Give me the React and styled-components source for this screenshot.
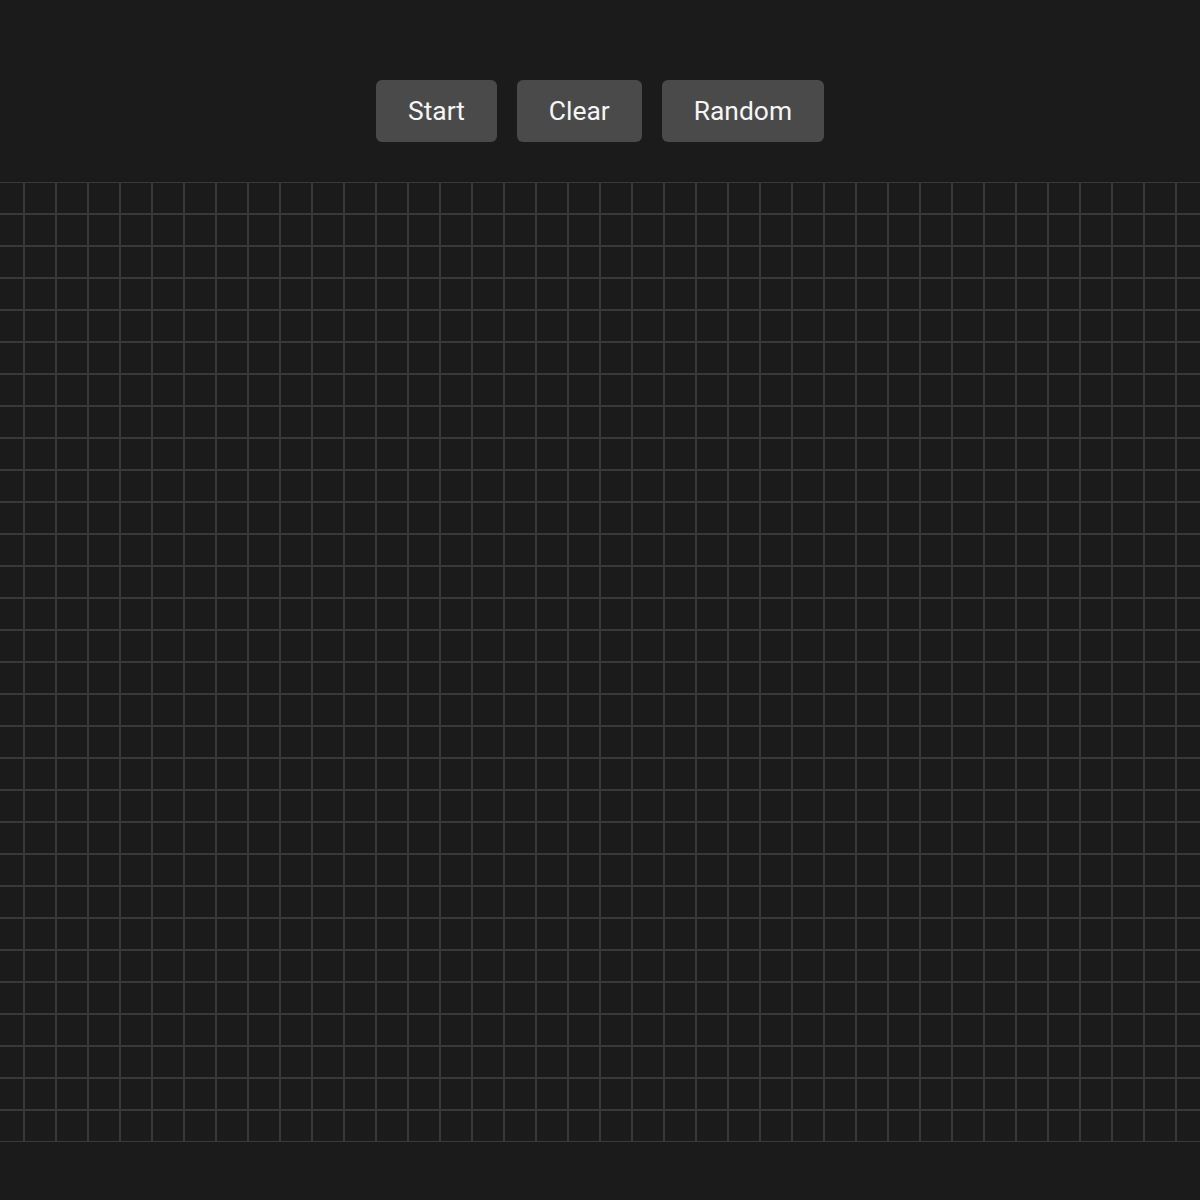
import React, { useState } from 'react';
import styled, { createGlobalStyle } from 'styled-components';

const ROWS = 30;
const COLS = 38;
const CELL = 32;

const GlobalStyle = createGlobalStyle`
  html, body {
    margin: 0;
    padding: 0;
    background: #1b1b1b;
    overflow: hidden;
  }
  body {
    font-family: Roboto, "Liberation Sans", sans-serif;
  }
`;

const Page = styled.div`
  box-sizing: border-box;
  height: 1200px;
  display: flex;
  flex-direction: column;
  align-items: center;
  padding-top: 80px;
  gap: 40px;
  overflow: hidden;
`;

const Controls = styled.div`
  display: flex;
  gap: 20px;
`;

const Button = styled.button`
  padding: 16px 32px;
  border: none;
  border-radius: 6px;
  background: #4a4a4a;
  color: #f5f5f5;
  font-family: Roboto, "Liberation Sans", sans-serif;
  font-size: 26.4px;
  line-height: 30px;
  cursor: pointer;

  &:hover {
    background: #555;
  }
`;

const Board = styled.div`
  flex-shrink: 0;
  display: grid;
  grid-template-columns: repeat(${COLS}, ${CELL}px);
  grid-template-rows: repeat(${ROWS}, ${CELL}px);
`;

const Cell = styled.div`
  box-sizing: border-box;
  border: 1px solid #393939;
  background: ${props => (props.$alive ? '#d0d0d0' : 'transparent')};
`;

const emptyGrid = () => Array.from({ length: ROWS }, () => Array(COLS).fill(false));

const App = () => {
  const [grid, setGrid] = useState(emptyGrid);

  const toggle = (r, c) => {
    setGrid(prev => prev.map((row, ri) => (ri === r ? row.map((v, ci) => (ci === c ? !v : v)) : row)));
  };

  const randomize = () => {
    setGrid(emptyGrid().map(row => row.map(() => Math.random() > 0.7)));
  };

  return (
    <>
      <GlobalStyle />
      <Page>
        <Controls>
          <Button>Start</Button>
          <Button onClick={() => setGrid(emptyGrid())}>Clear</Button>
          <Button onClick={randomize}>Random</Button>
        </Controls>
        <Board>
          {grid.map((row, r) =>
            row.map((alive, c) => (
              <Cell key={`${r}-${c}`} $alive={alive} onClick={() => toggle(r, c)} />
            ))
          )}
        </Board>
      </Page>
    </>
  );
};

export default App;
